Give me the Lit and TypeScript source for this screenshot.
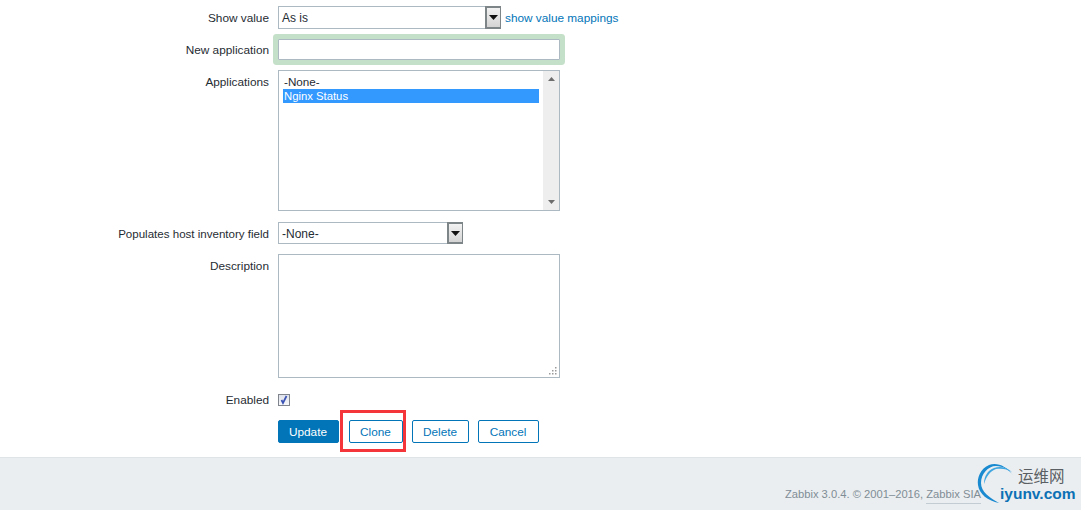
import { LitElement, html, css, svg } from "lit";
import { customElement } from "lit/decorators.js";

const arrowBtn = html`<span class="arrow"><svg width="9" height="5" viewBox="0 0 9 5"><path d="M0 0h9L4.500 5z" fill="#111"/></svg></span>`;

@customElement("app-root")
export class AppRoot extends LitElement {
  static styles = css`
    :host { display: block; width: 1081px; height: 510px; background: #fff; position: relative; overflow: hidden;
      font: 12px/14px "Liberation Sans", Arial, sans-serif; color: #1f2c33; }
    .form { display: flex; flex-direction: column; gap: 10px; padding-top: 6px; height: 452px; box-sizing: border-box; }
    .row { display: grid; grid-template-columns: 269px 1fr; column-gap: 9px; }
    .label { text-align: right; padding-top: 5px; font-size: 11.800px; }
    .label.narrow { font-size: 11.550px; }
    .label.tight { padding-top: 4px; }
    .field { display: flex; align-items: flex-start; }
    .select { box-sizing: border-box; height: 23px; border: 1px solid #acb9c2; display: flex; justify-content: space-between; align-items: stretch; padding-left: 3px; line-height: 22px; background: #fff; }
    .w-223 { width: 223px; }
    .w-185 { width: 185px; height: 22px; line-height: 22px; }
    .arrow { width: 16px; box-sizing: border-box; border: 2px solid #7d8589; border-right-width: 1px; background: linear-gradient(#f2f2f2, #d4d4d4); display: flex; align-items: center; justify-content: center; margin: -1px -1px -1px 0; }
    .link { color: #0275b8; margin: 5px 0 0 4px; font-size: 11.800px; }
    .highlight { box-shadow: 0 0 0 5px #c5e0c8; border-radius: 1px; }
    input { box-sizing: border-box; width: 282px; height: 21px; border: 1px solid #acb9c2; background: #fff; margin: 0; padding: 0 4px; outline: none; display: block; }
    .list { box-sizing: border-box; width: 282px; height: 141px; border: 1px solid #acb9c2; display: flex; justify-content: space-between; background: #fff; }
    .items { padding: 4px 0 0 4px; width: 256px; }
    .item { height: 14px; line-height: 14px; padding-left: 1px; font-size: 11.700px; }
    .item.sel { background: #3399ff; color: #fff; font-size: 11.300px; }
    .scroll { width: 16px; background: #eeeeee; display: flex; flex-direction: column; justify-content: space-between; align-items: center; padding: 6px 0; box-sizing: border-box; }
    .mt-11 { margin-top: 1px; }
    .area { box-sizing: border-box; width: 282px; height: 124px; border: 1px solid #acb9c2; position: relative; background: #fff; display: flex; justify-content: flex-end; align-items: flex-end; padding: 0 2px 2px 0; }
    .check-row { margin-top: 6px; }
    .check-row .label { padding-top: 0; margin-top: -1px; }
    .check { box-sizing: border-box; width: 12px; height: 12px; border: 1px solid #80848c; background: linear-gradient(#dfe2ea, #f6f7fa); display: flex; align-items: center; justify-content: center; }
    .buttons { display: flex; gap: 9px; margin-top: 3px; }
    button { box-sizing: border-box; height: 23px; font: inherit; font-size: 11.800px; border: 1px solid #0275b8; border-radius: 2px; background: #fff; color: #0275b8; padding: 0 1px 0 0; margin: 0; }
    button.primary { background: #0275b8; color: #fff; margin-right: 1px; }
    .b-update { width: 61px; }
    .b-clone { width: 54px; }
    .b-delete { width: 57px; }
    .b-cancel { width: 61px; }
    .red { position: absolute; left: 340px; top: 410px; width: 66px; height: 42px; box-sizing: border-box; border: 3px solid #f43539; pointer-events: none; }
    footer { box-sizing: border-box; height: 53px; margin-top: 5px; background: #ebeef0; border-top: 1px solid #dfe4e7; display: flex; justify-content: flex-end; padding: 29px 100px 0 0; font-size: 11.200px; line-height: 14px; color: #7f8d96; }
    .sia { border-bottom: 1px solid #c3ccd2; padding-bottom: 2px; height: 14px; }
    .logo { position: absolute; left: 976px; top: 460px; width: 105px; height: 48px; }
    .logo svg { position: absolute; left: 0; top: 0; }
    .cn { position: absolute; left: 42px; top: 6px; font: 15.500px/18px "Noto Sans CJK SC", sans-serif; color: #5a5f64; white-space: nowrap; }
    .en { position: absolute; left: 24px; top: 25px; font: bold 15.500px/18px "Liberation Sans", Arial, sans-serif; color: #0c71b5; white-space: nowrap; }
  `;

  render() {
    return html`
      <div class="form">
        <div class="row"><div class="label">Show value</div>
          <div class="field"><div class="select w-223"><span>As is</span>${arrowBtn}</div><span class="link">show value mappings</span></div></div>
        <div class="row"><div class="label tight">New application</div>
          <div class="field"><input class="highlight" type="text" /></div></div>
        <div class="row"><div class="label">Applications</div>
          <div class="field"><div class="list">
            <div class="items"><div class="item">-None-</div><div class="item sel">Nginx Status</div></div>
            <div class="scroll">
              <svg width="7" height="4" viewBox="0 0 7 4"><path d="M0 4h7L3.500 0z" fill="#6d6d6d"/></svg>
              <svg width="7" height="4" viewBox="0 0 7 4"><path d="M0 0h7L3.500 4z" fill="#6d6d6d"/></svg>
            </div>
          </div></div></div>
        <div class="row mt-11"><div class="label narrow">Populates host inventory field</div>
          <div class="field"><div class="select w-185"><span>-None-</span>${arrowBtn}</div></div></div>
        <div class="row"><div class="label">Description</div>
          <div class="field"><div class="area"><svg width="9" height="9" viewBox="0 0 9 9" fill="#9a9a9a">
            ${[[7,1],[4,4],[7,4],[1,7],[4,7],[7,7]].map(([x,y]) => svg`<rect x=${x} y=${y} width="1.500" height="1.500"/>`)}
          </svg></div></div></div>
        <div class="row check-row"><div class="label">Enabled</div>
          <div class="field"><span class="check"><svg width="10" height="10" viewBox="0 0 10 10"><path d="M2.500 5l1.500 3 3.500-7" fill="none" stroke="#3a53b4" stroke-width="1.700"/></svg></span></div></div>
        <div class="row"><div></div>
          <div class="buttons">
            <button class="primary b-update">Update</button>
            <button class="b-clone">Clone</button>
            <button class="b-delete">Delete</button>
            <button class="b-cancel">Cancel</button>
          </div></div>
      </div>
      <div class="red"></div>
      <footer><span>Zabbix 3.0.4. © 2001–2016,&nbsp;</span><span class="sia">Zabbix SIA</span></footer>
      <div class="logo">
        <svg width="42" height="48" viewBox="0 0 42 48">
          <path d="M38 16C30 5 20 2 13 5 4 9 1 18 2 25c1 9 10 16 21 18C14 38 5 32 5 23 5 14 12 6 20 6c7 0 13 4 18 10z" fill="#1a8ad0"/>
          <path d="M36 12C28 5 19 6 13 11 9 15 8 20 8 24c2-7 6-13 12-15 6-1 11 0 16 3z" fill="#3fa6e0"/>
        </svg>
        <span class="cn">运维网</span>
        <span class="en">iyunv.com</span>
      </div>
    `;
  }
}
